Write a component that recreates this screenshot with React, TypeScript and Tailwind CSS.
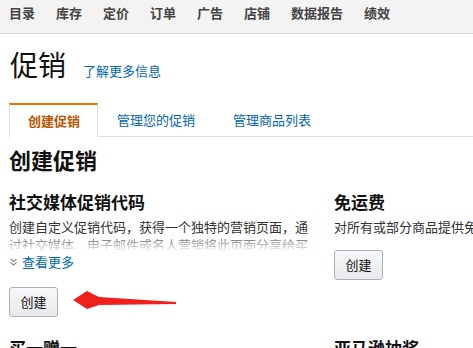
import React from "react";

const navItems = ["目录", "库存", "定价", "订单", "广告", "店铺", "数据报告", "绩效"];

function Btn() {
  return (
    <button className="w-[49px] h-[30px] rounded-[3px] border border-[#adb1b8] bg-gradient-to-b from-[#f7f8fa] to-[#e7e9ec] text-[13px] leading-[18px] text-[#111]">
      创建
    </button>
  );
}

export default function App() {
  return (
    <div
      className="w-[473px] h-[348px] overflow-hidden bg-white relative"
      style={{ fontFamily: '"Noto Sans CJK SC", "Noto Sans", sans-serif' }}
    >
      {/* top nav */}
      <div className="h-[34px] bg-[#f3f3f3] border-b border-[#d5d5d5] flex gap-[21px] pl-[9px] pt-[5px] whitespace-nowrap">
        {navItems.map((n) => (
          <span key={n} className="text-[13px] leading-[16px] font-bold text-[#444]">
            {n}
          </span>
        ))}
      </div>

      {/* title */}
      <div className="mt-[14px] pl-[10px] flex items-baseline whitespace-nowrap">
        <span className="text-[28px] leading-[32px] text-[#111]">促销</span>
        <span className="ml-[17px] text-[13px] leading-[18px] text-[#0066c0]">了解更多信息</span>
      </div>

      {/* tabs */}
      <div className="mt-[23px] ml-[9px] flex border-b border-[#ddd] h-[34px] whitespace-nowrap w-[600px]">
        <div className="-mb-px h-[34px] bg-white border-t-2 border-t-[#e77600] border-x border-x-[#ddd] pl-[18px] pr-[17px] flex items-center text-[13px] font-bold text-[#c45500]">
          创建促销
        </div>
        <div className="px-[19px] flex items-center text-[13px] text-[#0066c0]">管理您的促销</div>
        <div className="px-[19px] flex items-center text-[13px] text-[#0066c0]">管理商品列表</div>
      </div>

      <div className="pl-[9px]">
        <h2 className="mt-[8px] text-[22px] leading-[28px] font-bold text-[#111]">创建促销</h2>

        <div className="mt-[18px] grid grid-cols-[305px_305px] gap-x-[20px] gap-y-[20px] w-[650px]">
          {/* left column row 1 */}
          <div>
            <h3 className="text-[17px] leading-[22px] font-bold text-[#111]">社交媒体促销代码</h3>
            <div className="relative mt-[5px] h-[32px] overflow-hidden text-[13px] leading-[18px] text-[#333]">
              创建自定义促销代码，获得一个独特的营销页面，通过社交媒体、电子邮件或名人营销将此页面分享给买家。
              <div className="absolute left-0 right-0 top-[18px] bottom-0 bg-gradient-to-b from-white/20 to-white/90" />
            </div>
            <div className="mt-[3px] flex items-center gap-[5px] text-[13px] leading-[18px] text-[#0066c0]">
              <svg width="7" height="8" viewBox="0 0 7 8" className="ml-[1px]">
                <polyline points="0.5,0.8 3.5,3.5 6.5,0.8" fill="none" stroke="#888" strokeWidth="1.1" />
                <polyline points="0.5,4.3 3.5,7 6.5,4.3" fill="none" stroke="#888" strokeWidth="1.1" />
              </svg>
              <span>查看更多</span>
            </div>
            <div className="relative mt-[16px]">
              <Btn />
              <svg
                width="106"
                height="20"
                viewBox="0 0 106 20"
                className="absolute left-[63px] top-[3px]"
              >
                <polygon
                  points="1,10 15,1 27,7 104,12 104,14 27,15 15,19"
                  fill="#f0201c"
                />
              </svg>
            </div>
          </div>

          {/* right column row 1 */}
          <div>
            <h3 className="text-[17px] leading-[22px] font-bold text-[#111]">免运费</h3>
            <div className="mt-[5px] text-[13px] leading-[18px] text-[#333] whitespace-nowrap">
              对所有或部分商品提供免运费促销
            </div>
            <div className="mt-[14px]">
              <Btn />
            </div>
          </div>

          {/* row 2 */}
          <h3 className="text-[17px] leading-[22px] font-bold text-[#111]">买一赠一</h3>
          <h3 className="text-[17px] leading-[22px] font-bold text-[#111]">亚马逊抽奖</h3>
        </div>
      </div>
    </div>
  );
}
